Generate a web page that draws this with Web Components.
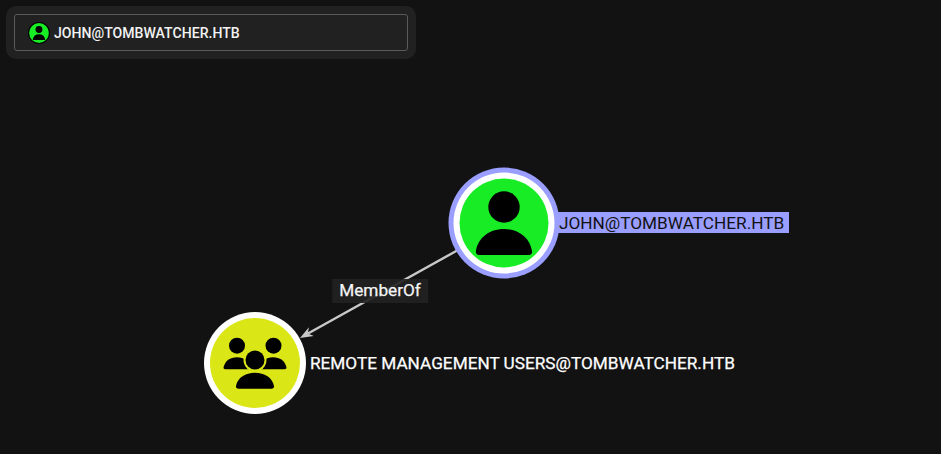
<!doctype html>
<html>
<head>
<meta charset="utf-8">
<style>
  html, body { margin: 0; height: 100%; background: #121212; overflow: hidden; }
  body { font-family: Roboto, "Liberation Sans", sans-serif; color: #fff; }
</style>
</head>
<body>
<graph-view>
  <search-panel slot="panel" label="JOHN@TOMBWATCHER.HTB"></search-panel>
  <graph-edge slot="canvas" x1="458" y1="250" x2="300" y2="338" label="MemberOf" lx="380" ly="291"></graph-edge>
  <graph-node slot="canvas" x="504" y="223" kind="user" fill="#17ec25" selected label="JOHN@TOMBWATCHER.HTB"></graph-node>
  <graph-node slot="canvas" x="255" y="363" kind="group" fill="#dbe617" label="REMOTE MANAGEMENT USERS@TOMBWATCHER.HTB"></graph-node>
</graph-view>

<script>
const USER_ICON = `
  <circle cx="50" cy="34" r="15.700" fill="#000"/>
  <path fill="#000" d="M26 82c-3 0-4.500-1.500-4-4C24 65 35 56 50 56s26 9 28 22c.5 2.500-1 4-4 4z"/>`

// side figures first, then a ring in the fill colour cuts them away from the front figure
const groupIcon = fill => `
  <circle cx="32" cy="32.700" r="8" fill="#000"/>
  <circle cx="68.500" cy="32.700" r="8" fill="#000"/>
  <path fill="#000" d="M20.500 56.300c-1.500 0-2.200-.8-1.900-2.200C20 48 25 44.300 32 44.300s12 3.700 13.500 9.800l.5 2.200z"/>
  <path fill="#000" d="M79.500 56.300c1.500 0 2.200-.8 1.900-2.200C80 48 75 44.300 68 44.300s-12 3.700-13.500 9.800l-.5 2.200z"/>
  <circle cx="50" cy="47" r="11.500" fill="${fill}"/>
  <circle cx="50" cy="47" r="9.500" fill="#000"/>
  <path fill="#000" d="M33.500 75.700c-1.800 0-2.800-1-2.500-2.700C32.500 64.500 40.500 59.700 50 59.700S67.500 64.500 69 73c.3 1.700-.7 2.700-2.500 2.700z"/>`

class GraphView extends HTMLElement {
  constructor() {
    super()
    this.attachShadow({ mode: 'open' }).innerHTML = `
      <style>
        :host { display: block; position: relative; width: 941px; height: 454px; background: #121212; overflow: hidden; }
        .top { display: flex; padding: 6px; position: relative; z-index: 2; }
      </style>
      <slot name="canvas"></slot>
      <div class="top"><slot name="panel"></slot></div>`
  }
}

class SearchPanel extends HTMLElement {
  constructor() {
    super()
    this.attachShadow({ mode: 'open' }).innerHTML = `
      <style>
        :host { display: block; width: 410px; box-sizing: border-box; padding: 8px; background: #212121; border-radius: 10px; }
        .field { display: flex; align-items: center; gap: 4px; height: 37px; box-sizing: border-box; padding-left: 13px; border: 1px solid #5a5a5a; border-radius: 3px; }
        svg { width: 22px; height: 22px; display: block; }
        span { font: 500 14.100px Roboto, sans-serif; color: #f2f2f2; }
      </style>
      <div class="field">
        <svg viewBox="0 0 100 100">
          <circle cx="50" cy="50" r="50" fill="#000"/>
          <circle cx="50" cy="50" r="45" fill="#17ec25"/>
          ${USER_ICON}
        </svg>
        <span>${this.getAttribute('label')}</span>
      </div>`
  }
}

class GraphNode extends HTMLElement {
  constructor() {
    super()
    const selected = this.hasAttribute('selected')
    const fill = this.getAttribute('fill')
    const icon = this.getAttribute('kind') === 'group' ? groupIcon(fill) : USER_ICON
    const x = +this.getAttribute('x')
    const y = +this.getAttribute('y')
    this.attachShadow({ mode: 'open' }).innerHTML = `
      <style>
        :host { display: block; position: absolute; left: ${x}px; top: ${y}px; width: 0; height: 0; }
        svg { position: absolute; left: -57px; top: -57px; width: 114px; height: 114px; overflow: visible; }
        span {
          position: absolute; left: 54px; top: -11px; height: 21px;
          padding: 0 5px 0 1px; white-space: nowrap; font: 400 17.200px/23px Roboto, sans-serif;
          -webkit-text-stroke: .25px #fff;
        }
        span.sel { background: #9a9eff; color: #111; -webkit-text-stroke: 0; }
      </style>
      <svg viewBox="-57 -57 114 114">
        ${selected ? '<circle r="55.500" fill="#9a9eff"/>' : ''}
        <circle r="${selected ? 50.500 : 51}" fill="#fff"/>
        <circle r="${selected ? 44.500 : 45}" fill="${fill}"/>
        <g transform="translate(-50 -50)">${icon}</g>
      </svg>
      <span class="${selected ? 'sel' : ''}">${this.getAttribute('label')}</span>`
  }
}

class GraphEdge extends HTMLElement {
  constructor() {
    super()
    const [x1, y1, x2, y2, lx, ly] = ['x1', 'y1', 'x2', 'y2', 'lx', 'ly'].map(a => +this.getAttribute(a))
    const deg = Math.atan2(y2 - y1, x2 - x1) * 180 / Math.PI
    this.attachShadow({ mode: 'open' }).innerHTML = `
      <style>
        :host { display: block; position: absolute; inset: 0; }
        svg { position: absolute; left: 0; top: 0; width: 100%; height: 100%; }
        div {
          position: absolute; left: ${lx}px; top: ${ly}px; transform: translate(-50%, -50%);
          padding: 0 7px; height: 24px; font: 400 17.200px/23px Roboto, sans-serif; color: #f5f5f5;
          background: rgba(34, 34, 34, 0.92); white-space: nowrap; -webkit-text-stroke: .25px #f5f5f5;
        }
      </style>
      <svg>
        <line x1="${x1}" y1="${y1}" x2="${x2 + 8}" y2="${y2 - 4.500}" stroke="#c8c8c8" stroke-width="2.400"/>
        <polygon transform="translate(${x2} ${y2}) rotate(${deg})" fill="#c8c8c8" points="0,0 -13,-5 -9,0 -13,5"/>
      </svg>
      <div>${this.getAttribute('label')}</div>`
  }
}

customElements.define('graph-view', GraphView)
customElements.define('search-panel', SearchPanel)
customElements.define('graph-node', GraphNode)
customElements.define('graph-edge', GraphEdge)
</script>
</body>
</html>
